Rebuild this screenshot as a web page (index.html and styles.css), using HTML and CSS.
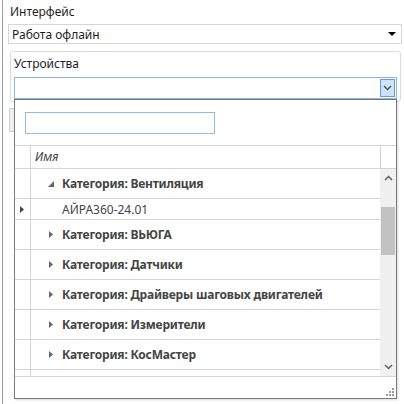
FILE: index.html
```html
<!DOCTYPE html>
<html>
<head>
<meta charset="utf-8">
<link rel="stylesheet" href="styles.css">
</head>
<body>
<div class="page">
  <div class="label">Интерфейс</div>
  <div class="combo">
    <span>Работа офлайн</span>
    <svg class="arrow" width="8" height="4" viewBox="0 0 8 4"><path d="M0 0h8L4 4z" fill="#000"/></svg>
  </div>
  <div class="group">
    <div class="group-title">Устройства</div>
    <div class="combo2">
      <div class="dropbtn">
        <svg width="9" height="6" viewBox="0 0 9 6"><path d="M1 1l3.5 3.5L8 1" fill="none" stroke="#555" stroke-width="1.5"/></svg>
      </div>
    </div>
  </div>
  <div class="behind"></div>

  <div class="popup">
    <div class="search"></div>
    <div class="grid">
      <div class="header">
        <div class="rh"></div>
        <div class="hcell">Имя</div>
        <div class="hsb"></div>
      </div>
      <div class="body">
        <div class="rows">
          <div class="row cat"><div class="rh"></div><div class="cell"><svg class="exp open" width="6" height="6" viewBox="0 0 6 6"><path d="M6 0v6H0z" fill="#666"/></svg>Категория: Вентиляция</div></div>
          <div class="row item"><div class="rh"><svg width="4" height="7" viewBox="0 0 4 7"><path d="M0 0l4 3.5L0 7z" fill="#444"/></svg></div><div class="cell">АЙРА360-24.01</div></div>
          <div class="row cat"><div class="rh"></div><div class="cell"><svg class="exp" width="4" height="7" viewBox="0 0 4 7"><path d="M0 0l4 3.5L0 7z" fill="#666"/></svg>Категория: ВЬЮГА</div></div>
          <div class="row cat"><div class="rh"></div><div class="cell"><svg class="exp" width="4" height="7" viewBox="0 0 4 7"><path d="M0 0l4 3.5L0 7z" fill="#666"/></svg>Категория: Датчики</div></div>
          <div class="row cat"><div class="rh"></div><div class="cell"><svg class="exp" width="4" height="7" viewBox="0 0 4 7"><path d="M0 0l4 3.5L0 7z" fill="#666"/></svg>Категория: Драйверы шаговых двигателей</div></div>
          <div class="row cat"><div class="rh"></div><div class="cell"><svg class="exp" width="4" height="7" viewBox="0 0 4 7"><path d="M0 0l4 3.5L0 7z" fill="#666"/></svg>Категория: Измерители</div></div>
          <div class="row cat"><div class="rh"></div><div class="cell"><svg class="exp" width="4" height="7" viewBox="0 0 4 7"><path d="M0 0l4 3.5L0 7z" fill="#666"/></svg>Категория: КосМастер</div></div>
          <div class="row last"><div class="rh"></div><div class="cell"></div></div>
        </div>
        <div class="vscroll">
          <div class="sbtn"><svg width="9" height="6" viewBox="0 0 9 6"><path d="M1 5l3.5-3.5L8 5" fill="none" stroke="#606060" stroke-width="1.5"/></svg></div>
          <div class="track"><div class="thumb"></div></div>
          <div class="sbtn"><svg width="9" height="6" viewBox="0 0 9 6"><path d="M1 1l3.5 3.5L8 1" fill="none" stroke="#606060" stroke-width="1.5"/></svg></div>
        </div>
      </div>
    </div>
    <div class="footer">
      <svg class="grip" width="8" height="8" viewBox="0 0 8 8" fill="#9a9a9a">
        <rect x="6" y="0" width="2" height="2"/>
        <rect x="3" y="3" width="2" height="2"/><rect x="6" y="3" width="2" height="2"/>
        <rect x="0" y="6" width="2" height="2"/><rect x="3" y="6" width="2" height="2"/><rect x="6" y="6" width="2" height="2"/>
      </svg>
    </div>
  </div>
</div>
</body>
</html>
```
FILE: styles.css
```css
html, body {
  margin: 0;
  padding: 0;
  background: #fff;
}
body {
  font-family: "Noto Sans", "Open Sans", sans-serif;
  font-size: 12px;
  color: #1e1e1e;
  width: 404px;
  height: 404px;
  overflow: hidden;
}
.page {
  position: relative;
  margin-left: 2px;
  border-left: 1px solid #a0a0a0;
  height: 404px;
  padding-left: 5px;
  padding-top: 4px;
  box-sizing: border-box;
}
.label {
  padding-left: 2px;
  height: 20px;
  line-height: 16px;
}
.combo {
  width: 394px;
  height: 20px;
  box-sizing: border-box;
  border: 1px solid #d6d6d6;
  display: flex;
  align-items: center;
  justify-content: space-between;
  padding: 0 5px 0 3px;
}
.combo .arrow { display: block; }
.group {
  margin-top: 7px;
  margin-left: 2px;
  width: 391px;
  height: 51px;
  box-sizing: border-box;
  border: 1px solid #dcdcdc;
  border-radius: 3px;
  padding: 5px 3px 0 3px;
}
.group-title {
  height: 20px;
  line-height: 14px;
}
.combo2 {
  width: 383px;
  height: 22px;
  box-sizing: border-box;
  border: 1px solid #87b7e2;
  display: flex;
  justify-content: flex-end;
  align-items: center;
  padding-right: 1px;
}
.dropbtn {
  width: 15px;
  height: 18px;
  box-sizing: border-box;
  border: 1px solid #5f9ee0;
  background: #cde4f8;
  display: flex;
  align-items: center;
  justify-content: center;
}
.dropbtn svg { display: block; }
.behind {
  margin-top: 6px;
  margin-left: 1px;
  width: 80px;
  height: 22px;
  border: 1px solid #d0d0d0;
  background: #f0f0f0;
}
.popup {
  position: absolute;
  left: 11px;
  top: 99px;
  width: 383px;
  height: 300px;
  box-sizing: border-box;
  border: 1px solid #7a7a7a;
  background: #fff;
  box-shadow: 1px 1px 2px rgba(0,0,0,0.15);
  display: flex;
  flex-direction: column;
}
.search {
  margin: 12px 0 0 10px;
  width: 190px;
  height: 22px;
  box-sizing: border-box;
  border: 1px solid #8cbbe3;
}
.grid {
  margin-top: 11px;
  border-top: 1px solid #d5d5d5;
  border-bottom: 1px solid #d5d5d5;
}
.header {
  display: flex;
  height: 22px;
  border-bottom: 1px solid #d5d5d5;
}
.rh {
  width: 15px;
  flex: none;
  border-right: 1px solid #d5d5d5;
  display: flex;
  align-items: center;
  justify-content: center;
}
.rh svg { display: block; margin-left: -2px; }
.hcell {
  flex: 1;
  padding-left: 4px;
  font-style: italic;
  color: #444;
  line-height: 22px;
}
.hsb {
  width: 15px;
  border-left: 1px solid #d5d5d5;
}
.body {
  display: flex;
  height: 207px;
  overflow: hidden;
}
.rows {
  flex: 1;
  display: flex;
  flex-direction: column;
}
.row {
  display: flex;
  flex: none;
  border-bottom: 1px solid #d5d5d5;
  box-sizing: border-box;
}
.row.cat { height: 30px; }
.row.item { height: 21px; }
.row.last { height: 7px; border-bottom: none; }
.cell {
  flex: 1;
  display: flex;
  align-items: center;
  padding-left: 31px;
  color: #444;
}
.row.cat .cell {
  font-weight: bold;
  letter-spacing: -0.2px;
  padding-left: 17px;
}
.exp {
  display: block;
  margin-left: 1px;
  margin-right: 9px;
}
.exp.open {
  margin-left: 0;
  margin-right: 8px;
}
.vscroll {
  width: 16px;
  background: #f0f0f0;
  display: flex;
  flex-direction: column;
}
.sbtn {
  height: 18px;
  display: flex;
  align-items: center;
  justify-content: center;
}
.track {
  flex: 1;
  padding-top: 20px;
}
.thumb {
  height: 48px;
  background: #c2c2c2;
  margin: 0 1px;
}
.footer {
  flex: 1;
  position: relative;
}
.grip {
  position: absolute;
  right: 2px;
  bottom: 2px;
}
```
